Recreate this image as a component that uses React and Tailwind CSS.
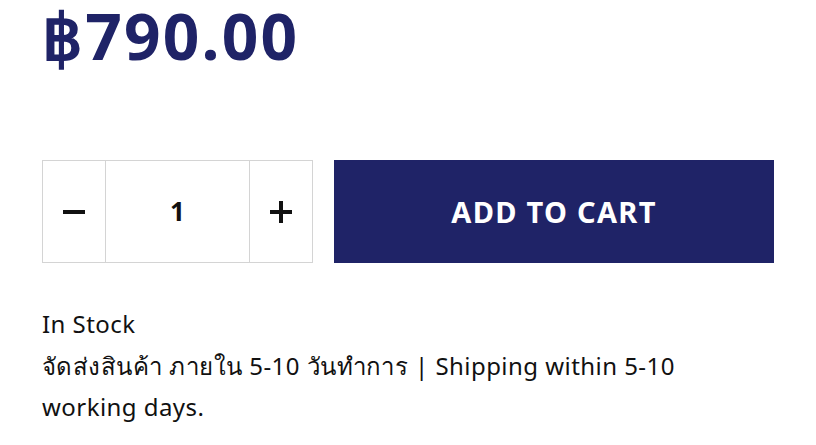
export default function App() {
  return (
    <div className="w-[816px] h-[445px] bg-white overflow-hidden" style={{ fontFamily: '"Noto Sans", "Open Sans", sans-serif' }}>
      <div className="pl-[42px] pr-[42px]">
        <div className="h-[72px] flex items-start">
          <div className="text-[64px] leading-[72px] font-bold text-[#1f2367] tracking-[2.2px]">฿790.00</div>
        </div>
        <div className="mt-[88px] flex gap-[21px]">
          <div className="flex w-[271px] h-[103px] border border-[#d4d4d4]">
            <div className="w-[63px] flex items-center justify-center border-r border-[#d4d4d4]">
              <svg width="22" height="4" viewBox="0 0 22 4"><rect width="22" height="4" fill="#111" /></svg>
            </div>
            <div className="flex-1 flex items-center justify-center text-[26px] font-bold text-[#111]">1</div>
            <div className="w-[63px] flex items-center justify-center border-l border-[#d4d4d4]">
              <svg width="22" height="22" viewBox="0 0 22 22"><rect y="9" width="22" height="4" fill="#111" /><rect x="9" width="4" height="22" fill="#111" /></svg>
            </div>
          </div>
          <button className="w-[440px] h-[103px] bg-[#1f2367] text-white text-[29px] font-bold tracking-[1.3px] flex items-center justify-center">ADD TO CART</button>
        </div>
        <div className="mt-[40px] text-[24px] leading-[41.5px] tracking-[0.45px] text-[#111] w-[700px]">
          <div>In Stock</div>
          <div>จัดส่งสินค้า ภายใน 5-10 วันทำการ | Shipping within 5-10<br />working days.</div>
        </div>
      </div>
    </div>
  );
}
